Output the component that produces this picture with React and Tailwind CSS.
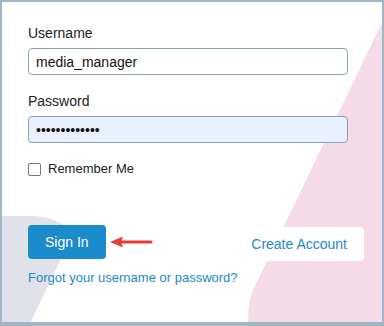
import React from "react";

export default function App() {
  return (
    <div
      className="relative w-[384px] h-[326px] overflow-hidden bg-white border-2 border-b-4 border-[#9fb6c3]"
      style={{ fontFamily: '"Liberation Sans", Arial, sans-serif' }}
    >
      <svg
        className="absolute top-0 left-0 pointer-events-none"
        width="380"
        height="320"
        viewBox="2 2 380 320"
      >
        <path
          d="M393,0 L254,288 Q246,304 249,330 L400,330 L400,0 Z"
          fill="#f5dbe7"
        />
        <path
          d="M0,216 L32,216 C50,216 75,226 70,240 L27,330 L0,330 Z"
          fill="#e1e1e9"
        />
      </svg>

      <div className="relative flex flex-col pl-[26px] pr-[18px] pt-[23px]">
        <label className="text-[14px] leading-[16px] text-[#222]">Username</label>
        <input
          type="text"
          readOnly
          defaultValue="media_manager"
          className="mt-[7px] w-[320px] h-[27px] pl-[7px] text-[14px] text-[#111] bg-white border border-[#8aa2b0] rounded-[4px] outline-none"
          style={{ fontFamily: '"Liberation Sans", Arial, sans-serif' }}
        />

        <label className="mt-[18px] text-[14px] leading-[16px] text-[#222]">Password</label>
        <input
          type="password"
          readOnly
          defaultValue="mediamanager1"
          className="mt-[7px] w-[320px] h-[27px] pl-[7px] text-[14px] text-[#111] bg-[#e8f0fe] border border-[#8aa2b0] rounded-[4px] outline-none"
          style={{ fontFamily: '"Liberation Sans", Arial, sans-serif' }}
        />

        <div className="mt-[18px] flex items-center h-[16px] gap-[7px]">
          <span className="w-[13px] h-[13px] rounded-[2px] border border-[#767676] bg-white" />
          <span className="text-[13px] leading-[16px] text-[#222]">Remember Me</span>
        </div>

        <div className="mt-[48px] flex items-start h-[36px]">
          <button className="h-[34px] px-[17px] rounded-[4px] bg-[#1a8bcb] text-white text-[14px] leading-[16px]">
            Sign In
          </button>
          <svg width="44" height="34" viewBox="0 0 44 34" className="ml-[3px]">
            <path d="M1,17 L14,11.5 L12,17 L14,22.5 Z" fill="#e8393c" />
            <line x1="11" y1="17" x2="42" y2="17" stroke="#e8393c" strokeWidth="3" strokeLinecap="round" />
          </svg>
          <div className="flex-1" />
          <button className="mt-[2px] h-[34px] px-[17px] rounded-[4px] bg-white text-[#1e88c8] text-[14px] leading-[16px]">
            Create Account
          </button>
        </div>

        <a className="mt-[9px] text-[13px] leading-[16px] text-[#1e88c8] self-start">
          Forgot your username or password?
        </a>
      </div>
    </div>
  );
}
